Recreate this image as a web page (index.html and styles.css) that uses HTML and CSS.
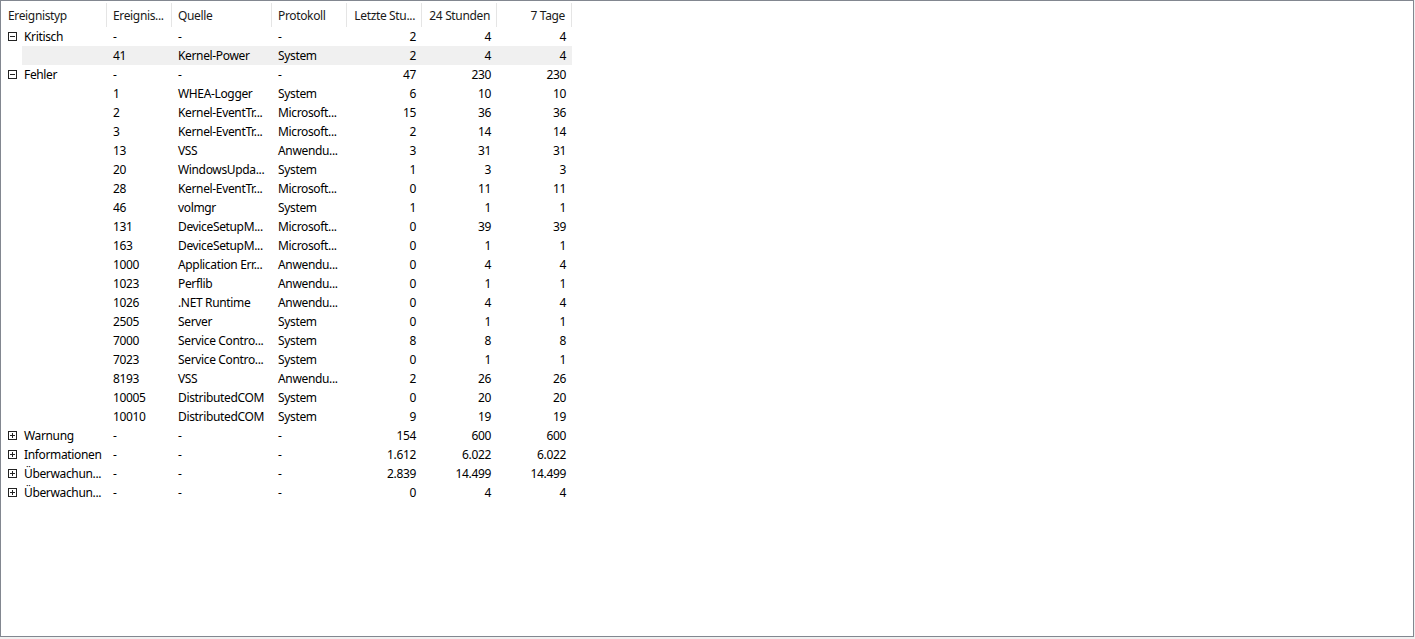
FILE: index.html
```html
<!DOCTYPE html>
<html lang="de">
<head>
<meta charset="utf-8">
<title>Ereignisse</title>
<link rel="stylesheet" href="styles.css">
</head>
<body>
<div class="frame">
  <div class="list">
    <div class="head">
      <div class="hc first">Ereignistyp</div>
      <div class="hc">Ereignis...</div>
      <div class="hc">Quelle</div>
      <div class="hc">Protokoll</div>
      <div class="hc num">Letzte Stu...</div>
      <div class="hc num">24 Stunden</div>
      <div class="hc num">7 Tage</div>
    </div>

    <div class="row"><div class="c first"><svg class="tg" width="9" height="9" viewBox="0 0 9 9"><rect x="0.5" y="0.5" width="8" height="8"/><path d="M2 4.5h5"/></svg>Kritisch</div><div class="c">-</div><div class="c">-</div><div class="c">-</div><div class="c num">2</div><div class="c num">4</div><div class="c num">4</div></div>
    <div class="row sel"><div class="c first"></div><div class="c">41</div><div class="c">Kernel-Power</div><div class="c">System</div><div class="c num">2</div><div class="c num">4</div><div class="c num">4</div></div>

    <div class="row"><div class="c first"><svg class="tg" width="9" height="9" viewBox="0 0 9 9"><rect x="0.5" y="0.5" width="8" height="8"/><path d="M2 4.5h5"/></svg>Fehler</div><div class="c">-</div><div class="c">-</div><div class="c">-</div><div class="c num">47</div><div class="c num">230</div><div class="c num">230</div></div>
    <div class="row"><div class="c first"></div><div class="c">1</div><div class="c">WHEA-Logger</div><div class="c">System</div><div class="c num">6</div><div class="c num">10</div><div class="c num">10</div></div>
    <div class="row"><div class="c first"></div><div class="c">2</div><div class="c">Kernel-EventTr...</div><div class="c">Microsoft...</div><div class="c num">15</div><div class="c num">36</div><div class="c num">36</div></div>
    <div class="row"><div class="c first"></div><div class="c">3</div><div class="c">Kernel-EventTr...</div><div class="c">Microsoft...</div><div class="c num">2</div><div class="c num">14</div><div class="c num">14</div></div>
    <div class="row"><div class="c first"></div><div class="c">13</div><div class="c">VSS</div><div class="c">Anwendu...</div><div class="c num">3</div><div class="c num">31</div><div class="c num">31</div></div>
    <div class="row"><div class="c first"></div><div class="c">20</div><div class="c">WindowsUpda...</div><div class="c">System</div><div class="c num">1</div><div class="c num">3</div><div class="c num">3</div></div>
    <div class="row"><div class="c first"></div><div class="c">28</div><div class="c">Kernel-EventTr...</div><div class="c">Microsoft...</div><div class="c num">0</div><div class="c num">11</div><div class="c num">11</div></div>
    <div class="row"><div class="c first"></div><div class="c">46</div><div class="c">volmgr</div><div class="c">System</div><div class="c num">1</div><div class="c num">1</div><div class="c num">1</div></div>
    <div class="row"><div class="c first"></div><div class="c">131</div><div class="c">DeviceSetupM...</div><div class="c">Microsoft...</div><div class="c num">0</div><div class="c num">39</div><div class="c num">39</div></div>
    <div class="row"><div class="c first"></div><div class="c">163</div><div class="c">DeviceSetupM...</div><div class="c">Microsoft...</div><div class="c num">0</div><div class="c num">1</div><div class="c num">1</div></div>
    <div class="row"><div class="c first"></div><div class="c">1000</div><div class="c">Application Err...</div><div class="c">Anwendu...</div><div class="c num">0</div><div class="c num">4</div><div class="c num">4</div></div>
    <div class="row"><div class="c first"></div><div class="c">1023</div><div class="c">Perflib</div><div class="c">Anwendu...</div><div class="c num">0</div><div class="c num">1</div><div class="c num">1</div></div>
    <div class="row"><div class="c first"></div><div class="c">1026</div><div class="c">.NET Runtime</div><div class="c">Anwendu...</div><div class="c num">0</div><div class="c num">4</div><div class="c num">4</div></div>
    <div class="row"><div class="c first"></div><div class="c">2505</div><div class="c">Server</div><div class="c">System</div><div class="c num">0</div><div class="c num">1</div><div class="c num">1</div></div>
    <div class="row"><div class="c first"></div><div class="c">7000</div><div class="c">Service Contro...</div><div class="c">System</div><div class="c num">8</div><div class="c num">8</div><div class="c num">8</div></div>
    <div class="row"><div class="c first"></div><div class="c">7023</div><div class="c">Service Contro...</div><div class="c">System</div><div class="c num">0</div><div class="c num">1</div><div class="c num">1</div></div>
    <div class="row"><div class="c first"></div><div class="c">8193</div><div class="c">VSS</div><div class="c">Anwendu...</div><div class="c num">2</div><div class="c num">26</div><div class="c num">26</div></div>
    <div class="row"><div class="c first"></div><div class="c">10005</div><div class="c">DistributedCOM</div><div class="c">System</div><div class="c num">0</div><div class="c num">20</div><div class="c num">20</div></div>
    <div class="row"><div class="c first"></div><div class="c">10010</div><div class="c">DistributedCOM</div><div class="c">System</div><div class="c num">9</div><div class="c num">19</div><div class="c num">19</div></div>

    <div class="row"><div class="c first"><svg class="tg" width="9" height="9" viewBox="0 0 9 9"><rect x="0.5" y="0.5" width="8" height="8"/><path d="M2 4.5h5M4.5 2v5"/></svg>Warnung</div><div class="c">-</div><div class="c">-</div><div class="c">-</div><div class="c num">154</div><div class="c num">600</div><div class="c num">600</div></div>
    <div class="row"><div class="c first"><svg class="tg" width="9" height="9" viewBox="0 0 9 9"><rect x="0.5" y="0.5" width="8" height="8"/><path d="M2 4.5h5M4.5 2v5"/></svg>Informationen</div><div class="c">-</div><div class="c">-</div><div class="c">-</div><div class="c num">1.612</div><div class="c num">6.022</div><div class="c num">6.022</div></div>
    <div class="row"><div class="c first"><svg class="tg" width="9" height="9" viewBox="0 0 9 9"><rect x="0.5" y="0.5" width="8" height="8"/><path d="M2 4.5h5M4.5 2v5"/></svg>Überwachun...</div><div class="c">-</div><div class="c">-</div><div class="c">-</div><div class="c num">2.839</div><div class="c num">14.499</div><div class="c num">14.499</div></div>
    <div class="row"><div class="c first"><svg class="tg" width="9" height="9" viewBox="0 0 9 9"><rect x="0.5" y="0.5" width="8" height="8"/><path d="M2 4.5h5M4.5 2v5"/></svg>Überwachun...</div><div class="c">-</div><div class="c">-</div><div class="c">-</div><div class="c num">0</div><div class="c num">4</div><div class="c num">4</div></div>
  </div>
</div>
</body>
</html>
```

FILE: styles.css
```css
html, body {
  margin: 0;
  padding: 0;
  background: #f0f0f0;
}
body {
  width: 1415px;
  height: 639px;
  font-family: "Noto Sans", "Open Sans", sans-serif;
  font-size: 12px;
  letter-spacing: -0.35px;
  color: #000;
}
.frame {
  box-sizing: border-box;
  width: 1414px;
  height: 637px;
  border: 1px solid #828790;
  background: #fff;
  overflow: hidden;
}
.list {
  width: 571px;
}
.head,
.row {
  display: grid;
  grid-template-columns: 106px 65px 100px 75px 75px 75px 75px;
}
.head {
  height: 26px;
  padding-top: 2px;
  box-sizing: border-box;
}
.hc {
  height: 24px;
  box-sizing: border-box;
  border-right: 1px solid #e5e5e5;
  padding: 5px 5px 0 6px;
  line-height: 16px;
  white-space: nowrap;
  overflow: hidden;
  color: #1a1a1a;
}
.hc.first {
  padding-left: 7px;
}
.row {
  height: 19px;
  line-height: 19px;
}
.c {
  padding: 0 5px 0 6px;
  white-space: nowrap;
  overflow: hidden;
}
.c.first {
  display: flex;
  align-items: center;
  padding-left: 7px;
}
.num {
  text-align: right;
}
.hc.num {
  padding-right: 6px;
}
.c.num {
  padding-right: 6px;
}
.row.sel {
  background: linear-gradient(to right, transparent 21px, #f0f0f0 21px);
}
.tg {
  flex: none;
  margin-right: 7px;
  fill: none;
  stroke: #222;
  stroke-width: 1;
  shape-rendering: crispEdges;
}
```
